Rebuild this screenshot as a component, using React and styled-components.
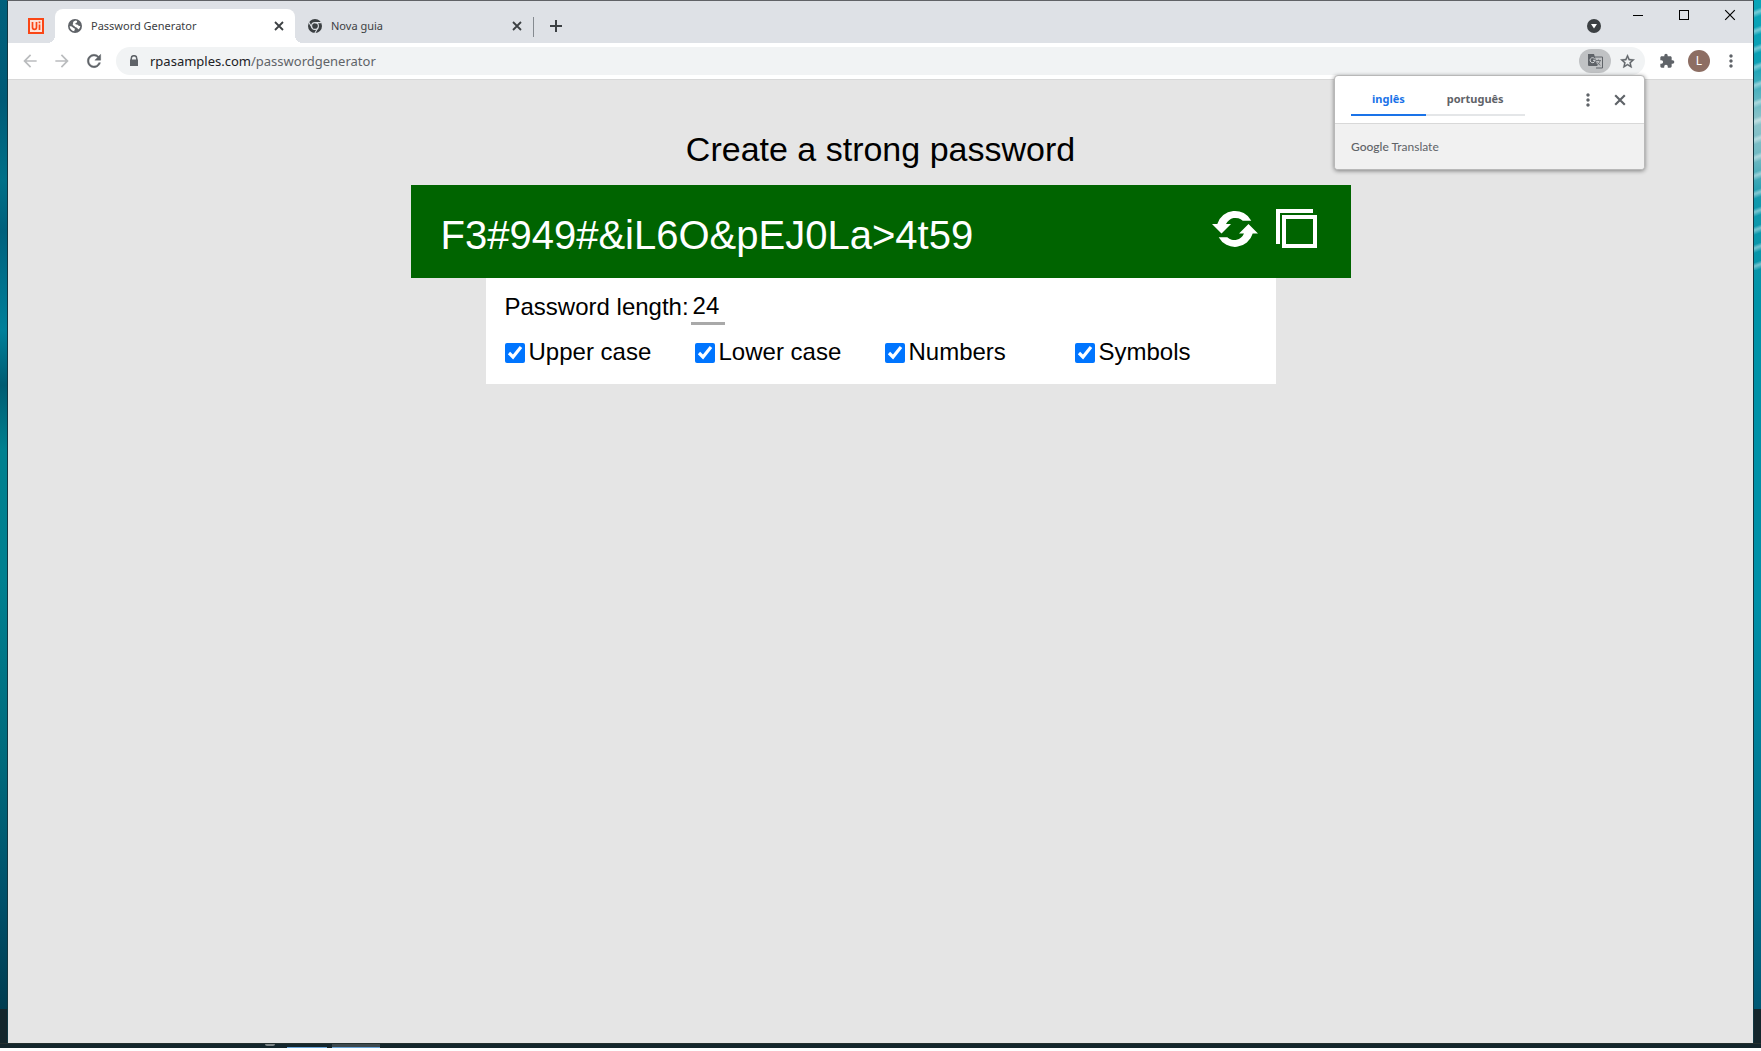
import React, { useState } from "react";
import styled, { createGlobalStyle } from "styled-components";

const GlobalStyle = createGlobalStyle`
  *, *::before, *::after { box-sizing: border-box; }
  body { margin: 0; background: #fff; }
  button { border: 0; padding: 0; background: none; color: inherit; font: inherit; cursor: pointer; }
`;

const ui = `"Segoe UI", "Noto Sans", sans-serif`;
const arial = `"Liberation Sans", Arial, sans-serif`;

const Desktop = styled.div`
  position: relative;
  display: grid;
  grid-template-columns: 7px minmax(0, 1fr) 7px;
  grid-template-rows: minmax(0, 1fr) 5px;
  height: calc(100vh - 3px);
  overflow: hidden;
  background: #14262c;
`;

const Wallpaper = styled.div`
  grid-row: 1;
  margin-bottom: 34px;
  background: ${(p) =>
    p.$side === "left"
      ? "linear-gradient(#00607c 0, #005a76 100px, #007088 180px, #00607c 230px, #00809a 330px, #005c72 385px, #00808f 450px, #008090 580px, #006a7c 760px, #00506a 900px, #003c50)"
      : "repeating-linear-gradient(160deg, rgba(255,255,255,0) 0 9px, rgba(255,255,255,.4) 12px 13px, rgba(255,255,255,0) 17px) 0 0 / 100% 270px no-repeat, linear-gradient(#0aa5b8 0, #0a9fb4 60px, #8fc4ca 120px, #6cb8c2 160px, #1199ad 200px, #0093a8 300px, #0090a8 600px, #006c88 900px, #005874)"};
`;

const Window = styled.section`
  grid-column: 2;
  grid-row: 1;
  display: flex;
  flex-direction: column;
  border: 1px solid #123640;
  border-top-color: #606266;
  border-bottom: 0;
  background: #e5e5e5;
`;

const Taskbar = styled.footer`
  grid-column: 1 / -1;
  grid-row: 2;
  display: flex;
  align-items: flex-end;
  padding-left: 265px;
  gap: 5px;
  border-top: 1px solid #24302f;
`;

const SearchRing = styled.span`
  align-self: flex-start;
  width: 10px;
  height: 2px;
  margin-right: 7px;
  border-radius: 0 0 5px 5px;
  background: #7d8688;
`;

const TaskItem = styled.span`
  width: ${(p) => p.$width}px;
  height: 4px;
  border-bottom: 1px solid #6aa5d8;
  background: ${(p) => (p.$active ? "#3c484c" : "transparent")};
`;

const TabStrip = styled.header`
  display: flex;
  height: 42px;
  background: #dee1e6;
  color: #3c4043;
  font: 11px/16px ${ui};
`;

const PinnedTab = styled.button`
  display: grid;
  place-items: center;
  width: 47px;
  padding: 8px 0 0 8px;
`;

const Tab = styled.div`
  position: relative;
  display: flex;
  align-items: center;
  width: ${(p) => (p.$active ? 240 : 238)}px;
  height: 34px;
  margin-top: 8px;
  padding: 0 10px 0 12px;
  border-radius: 8px 8px 0 0;
  background: ${(p) => (p.$active ? "#fff" : "transparent")};

  &::before, &::after {
    content: ${(p) => (p.$active ? '""' : "none")};
    position: absolute;
    bottom: 0;
    width: 8px;
    height: 8px;
  }
  &::before { left: -8px; background: radial-gradient(circle at 0 0, transparent 8px, #fff 8px); }
  &::after { right: -8px; background: radial-gradient(circle at 100% 0, transparent 8px, #fff 8px); }
`;

const TabTitle = styled.span`
  flex: 1;
  padding-left: 8px;
`;

const IconButton = styled.button`
  display: grid;
  place-items: center;
  width: ${(p) => p.$size || 32}px;
  height: ${(p) => p.$size || 32}px;
  flex: none;
  color: ${(p) => p.$color || "#5f6368"};
`;

const TabDivider = styled.span`
  width: 1px;
  height: 20px;
  margin-top: 16px;
  background: #858a90;
`;

const NewTab = styled(IconButton)`
  margin: 9px auto 0 6px;
`;

const TabSearch = styled(IconButton)`
  margin: 9px 5px 0 0;
`;

const WindowButton = styled.button`
  display: grid;
  place-items: center;
  width: 46px;
  height: 28px;
  color: #000;
`;

const Toolbar = styled.div`
  display: flex;
  align-items: center;
  height: 37px;
  padding: 0 6px;
  border-bottom: 1px solid #d8d8d8;
  background: #fff;
`;

const AddressBar = styled.div`
  display: flex;
  flex: 1;
  align-items: center;
  height: 28px;
  margin: 0 6px;
  padding: 0 2px 0 12px;
  border-radius: 14px;
  background: #f1f3f4;
  color: #5f6368;
  font: 13px/20px ${ui};
`;

const Url = styled.a`
  flex: 1;
  padding-left: 10px;
  color: #5f6368;
  text-decoration: none;

  span { color: #202124; }
`;

const TranslateButton = styled(IconButton)`
  height: 24px;
  border-radius: 12px;
  background: #c0c2c4;
`;

const Avatar = styled.button`
  width: 22px;
  height: 22px;
  margin: 0 5px;
  border-radius: 50%;
  background: #8d6e63;
  color: #fff;
  font: 12px/22px ${ui};
`;

const Popup = styled.aside`
  position: absolute;
  top: 75px;
  right: 116px;
  width: 311px;
  overflow: hidden;
  border: 1px solid #b8b8b8;
  border-radius: 4px;
  background: #fff;
  box-shadow: 0 1px 4px rgba(0, 0, 0, 0.45);
`;

const PopupHeader = styled.div`
  display: flex;
  align-items: center;
  justify-content: space-between;
  height: 47px;
  padding: 0 8px 0 16px;
`;

const Languages = styled.div`
  display: flex;
`;

const Language = styled.button`
  height: 32px;
  padding: 0 21px;
  border-bottom: 2px solid ${(p) => (p.$active ? "#1a73e8" : "#e4e6e8")};
  color: ${(p) => (p.$active ? "#1a73e8" : "#5f6368")};
  font: bold 11px/16px ${ui};
`;

const PopupActions = styled.div`
  display: flex;
`;

const PopupFooter = styled.div`
  height: 46px;
  padding: 0 16px;
  border-top: 1px solid #d8d8d8;
  background: #f1f1f1;
  color: #5f6368;
  font: 12px/45px Lato, sans-serif;

  b { font-weight: 500; }
`;

const Page = styled.main`
  flex: 1;
  display: flex;
  flex-direction: column;
  align-items: center;
  padding: 49px 16px 0;
  color: #000;
  font-family: ${arial};
`;

const Title = styled.h1`
  margin: 0 0 16px;
  font-size: 34px;
  font-weight: 400;
  line-height: 40px;
`;

const PasswordBar = styled.section`
  display: flex;
  align-items: center;
  gap: 18px;
  width: 100%;
  max-width: 940px;
  height: 93px;
  padding: 0 34px 0 30px;
  background: #006400;
  color: #fff;
`;

const Password = styled.output`
  flex: 1;
  padding-top: 6px;
  font-size: 40px;
  line-height: 46px;
`;

const BarButton = styled.button`
  display: grid;
  place-items: center;
  height: 48px;
  margin-bottom: 5px;
`;

const Options = styled.form`
  display: flex;
  flex-direction: column;
  gap: 13px;
  width: 100%;
  max-width: 790px;
  height: 106px;
  padding: 11px 18px 0;
  background: #fff;
  font-size: 24px;
  line-height: 28px;
`;

const LengthField = styled.label`
  display: flex;
  align-items: center;
  gap: 2px;
  padding-left: 1px;
`;

const LengthInput = styled.input`
  width: 34px;
  height: 36px;
  padding: 0 0 0 2px;
  border: 0;
  border-bottom: 3px solid #a9a9a9;
  background: transparent;
  color: inherit;
  font: inherit;
`;

const Checks = styled.div`
  display: grid;
  grid-template-columns: repeat(4, 190px);
`;

const Check = styled.label`
  display: flex;
  align-items: center;
  gap: 4px;

  input { width: 20px; height: 20px; margin: 2px 0 0 1px; }
`;

const Svg = ({ size = 16, box = 24, children, ...rest }) => (
  <svg width={size} height={size} viewBox={`0 0 ${box} ${box}`} fill="currentColor" aria-hidden="true" {...rest}>
    {children}
  </svg>
);

const Close = ({ size = 10, w = 1.8 }) => (
  <Svg size={size} box={10}>
    <path d="M1 1l8 8M9 1L1 9" stroke="currentColor" strokeWidth={w} fill="none" />
  </Svg>
);

const Dots = () => (
  <Svg size={20}>
    <path d="M12 8c1.100 0 2-.9 2-2s-.9-2-2-2-2 .9-2 2 .9 2 2 2zm0 2c-1.100 0-2 .9-2 2s.9 2 2 2 2-.9 2-2-.9-2-2-2zm0 6c-1.100 0-2 .9-2 2s.9 2 2 2 2-.9 2-2-.9-2-2-2z" />
  </Svg>
);

const UiPathIcon = () => (
  <svg width="16" height="16" viewBox="0 0 16 16" fill="none" stroke="#fa4616" aria-hidden="true">
    <rect x="1" y="1" width="14" height="14" strokeWidth="2" fill="#fde3da" />
    <path d="M4.500 4v5.200c0 2.800 4 2.800 4 0V4M11.500 6.500V12M11.500 3.500v1.800" strokeWidth="1.700" />
  </svg>
);

const Globe = () => (
  <Svg size={16} box={16}>
    <circle cx="8" cy="8" r="7" fill="#5f6368" />
    <path d="M8.800 2.600l1.200.3c.4 1-.2 1.700-1 2-.9.300-.9 1.100-.3 1.400.8.400 1.900.1 2.400 1 .4.800 1.300.9 2.200.700-.1 1.200-.6 2.300-1.500 3.200-.8-.1-1.100-.8-1.600-1.300-.8-.8-2-.5-2.500-1.400-.4-.8-1.300-.8-1.800-1.500-.5-.8.400-1.500.2-2.300-.1-.8.700-1.700 2.700-2.100z" fill="#fff" />
    <path d="M2.600 8.300c1.300-.2 2.600.4 3.400 1.200.8.700 1.800.6 1.900 1.600.1.800-.7 1.100-.6 2.200-2.500-.3-4.500-2.500-4.700-5z" fill="#fff" />
  </Svg>
);

const ChromeIcon = () => (
  <Svg size={16} box={16}>
    <circle cx="8" cy="8" r="7" fill="#3c4043" />
    <circle cx="8" cy="8" r="3.400" fill="none" stroke="#dee1e6" strokeWidth="1.100" />
    <path d="M8 4.600h6.400M5.100 9.700L1.800 4.200M10.900 9.700L7.800 15.200" stroke="#dee1e6" strokeWidth="1.100" />
  </Svg>
);

const RefreshArrows = () => (
  <svg width="46" height="38" viewBox="0 0 46 38" fill="#fff" aria-hidden="true">
    <path d="M39.300 10.700A18.500 18.500 0 0 0 5.300 14H0l9.500 9.600L19 14h-5a10.500 10.500 0 0 1 16.700-3.300z" />
    <path d="M6.700 27.300A18.500 18.500 0 0 0 40.700 23.500H46L36.500 14 27 23.500h5a10.500 10.500 0 0 1-16.700 3.800z" />
  </svg>
);

const CopyIcon = () => (
  <svg width="41" height="40" viewBox="0 0 41 40" fill="#fff" aria-hidden="true">
    <path d="M0 0h37v4H4v31H0z" />
    <path fillRule="evenodd" d="M6 6h35v33H6zM10 10v25h27V10z" />
  </svg>
);

const CHECKS = ["Upper case", "Lower case", "Numbers", "Symbols"];

export default function App() {
  const [length, setLength] = useState("24");
  return (
    <>
      <GlobalStyle />
      <Desktop>
        <Wallpaper $side="left" />
        <Window>
          <TabStrip>
            <PinnedTab aria-label="UiPath"><UiPathIcon /></PinnedTab>
            <Tab $active>
              <Globe />
              <TabTitle>Password Generator</TabTitle>
              <IconButton $size={12} $color="#3c4043" aria-label="Close tab"><Close /></IconButton>
            </Tab>
            <Tab>
              <ChromeIcon />
              <TabTitle>Nova guia</TabTitle>
              <IconButton $size={12} $color="#3c4043" aria-label="Close tab"><Close /></IconButton>
            </Tab>
            <TabDivider />
            <NewTab $color="#3c4043" aria-label="New tab">
              <Svg size={12} box={12}><path d="M5 0h2v5h5v2H7v5H5V7H0V5h5z" /></Svg>
            </NewTab>
            <TabSearch $color="#3c4043" aria-label="Search tabs">
              <Svg size={14} box={14}><circle cx="7" cy="7" r="7" /><path d="M4 5h6l-3 4.500z" fill="#fff" /></Svg>
            </TabSearch>
            <WindowButton aria-label="Minimize">
              <Svg size={10} box={10}><path d="M0 5h10v1H0z" /></Svg>
            </WindowButton>
            <WindowButton aria-label="Maximize">
              <Svg size={10} box={10}><path fillRule="evenodd" d="M0 0h10v10H0zM1 1v8h8V1z" /></Svg>
            </WindowButton>
            <WindowButton aria-label="Close"><Close size={12} w={1} /></WindowButton>
          </TabStrip>
          <Toolbar>
            <IconButton $color="#babcbe" aria-label="Back">
              <Svg size={20}><path d="M20 11H7.830l5.590-5.590L12 4l-8 8 8 8 1.410-1.410L7.830 13H20v-2z" /></Svg>
            </IconButton>
            <IconButton $color="#babcbe" aria-label="Forward">
              <Svg size={20}><path d="M12 4l-1.410 1.410L16.170 11H4v2h12.170l-5.580 5.590L12 20l8-8z" /></Svg>
            </IconButton>
            <IconButton aria-label="Reload">
              <Svg size={20}><path d="M17.650 6.350C16.200 4.900 14.210 4 12 4c-4.420 0-7.990 3.580-7.990 8s3.570 8 7.990 8c3.730 0 6.840-2.550 7.730-6h-2.080c-.82 2.330-3.040 4-5.650 4-3.310 0-6-2.690-6-6s2.690-6 6-6c1.660 0 3.140.69 4.220 1.780L13 11h7V4l-2.350 2.350z" stroke="currentColor" strokeWidth=".5" /></Svg>
            </IconButton>
            <AddressBar>
              <Svg size={12} box={12}><path d="M9.500 4.500V3.400a3.500 3.500 0 0 0-7 0v1.100H2V11h8V4.500zM4 4.500V3.400a2 2 0 0 1 4 0v1.100z" /></Svg>
              <Url href="#"><span>rpasamples.com</span>/passwordgenerator</Url>
              <TranslateButton aria-label="Translate this page">
                <svg width="15" height="15" viewBox="0 0 15 15" aria-hidden="true">
                  <path d="M6 3h8.500v11H8" fill="#c0c2c4" stroke="#5f6368" />
                  <path d="M8 6.500h5M10.500 5.500v1M12 7c-.5 2-2 3.500-3 4M9.500 8.500c.7 1.300 1.700 2.200 3 2.800" fill="none" stroke="#5f6368" strokeWidth=".8" />
                  <path d="M0 0h6l3.500 12H1a1 1 0 0 1-1-1z" fill="#5f6368" />
                  <path d="M6.600 4.700a2.500 2.500 0 1 0 .5 1.600H5" fill="none" stroke="#d8dadc" strokeWidth="1" />
                </svg>
              </TranslateButton>
              <IconButton aria-label="Bookmark this page">
                <Svg size={17}><path d="M22 9.240l-7.190-.62L12 2 9.190 8.630 2 9.240l5.460 4.730L5.820 21 12 17.270 18.180 21l-1.630-7.030L22 9.240zM12 15.400l-3.760 2.270 1-4.280-3.320-2.880 4.380-.38L12 6.100l1.710 4.040 4.380.38-3.320 2.880 1 4.280L12 15.400z" stroke="currentColor" strokeWidth=".5" /></Svg>
              </IconButton>
            </AddressBar>
            <IconButton aria-label="Extensions">
              <Svg size={16}><path d="M20.500 11H19V7c0-1.100-.9-2-2-2h-4V3.500a2.500 2.500 0 0 0-5 0V5H4c-1.100 0-2 .9-2 2v3.800h1.500a2.700 2.700 0 0 1 0 5.400H2V20c0 1.100.9 2 2 2h3.800v-1.500a2.700 2.700 0 0 1 5.400 0V22H17c1.100 0 2-.9 2-2v-4h1.500a2.500 2.500 0 0 0 0-5z" /></Svg>
            </IconButton>
            <Avatar aria-label="Profile">L</Avatar>
            <IconButton aria-label="Menu"><Dots /></IconButton>
          </Toolbar>
          <Page>
            <Title>Create a strong password</Title>
            <PasswordBar>
              <Password>{"F3#949#&iL6O&pEJ0La>4t59"}</Password>
              <BarButton aria-label="Generate a new password"><RefreshArrows /></BarButton>
              <BarButton aria-label="Copy password"><CopyIcon /></BarButton>
            </PasswordBar>
            <Options>
              <LengthField>
                Password length:
                <LengthInput value={length} onChange={(e) => setLength(e.target.value)} />
              </LengthField>
              <Checks>
                {CHECKS.map((name) => (
                  <Check key={name}>
                    <input type="checkbox" defaultChecked />
                    {name}
                  </Check>
                ))}
              </Checks>
            </Options>
          </Page>
        </Window>
        <Wallpaper $side="right" />
        <Taskbar>
          <SearchRing />
          <TaskItem $width={40} />
          <TaskItem $width={48} $active />
        </Taskbar>
        <Popup>
          <PopupHeader>
            <Languages>
              <Language $active>inglês</Language>
              <Language>português</Language>
            </Languages>
            <PopupActions>
              <IconButton aria-label="Options"><Dots /></IconButton>
              <IconButton aria-label="Close"><Close size={12} /></IconButton>
            </PopupActions>
          </PopupHeader>
          <PopupFooter><b>Google</b> Translate</PopupFooter>
        </Popup>
      </Desktop>
    </>
  );
}
